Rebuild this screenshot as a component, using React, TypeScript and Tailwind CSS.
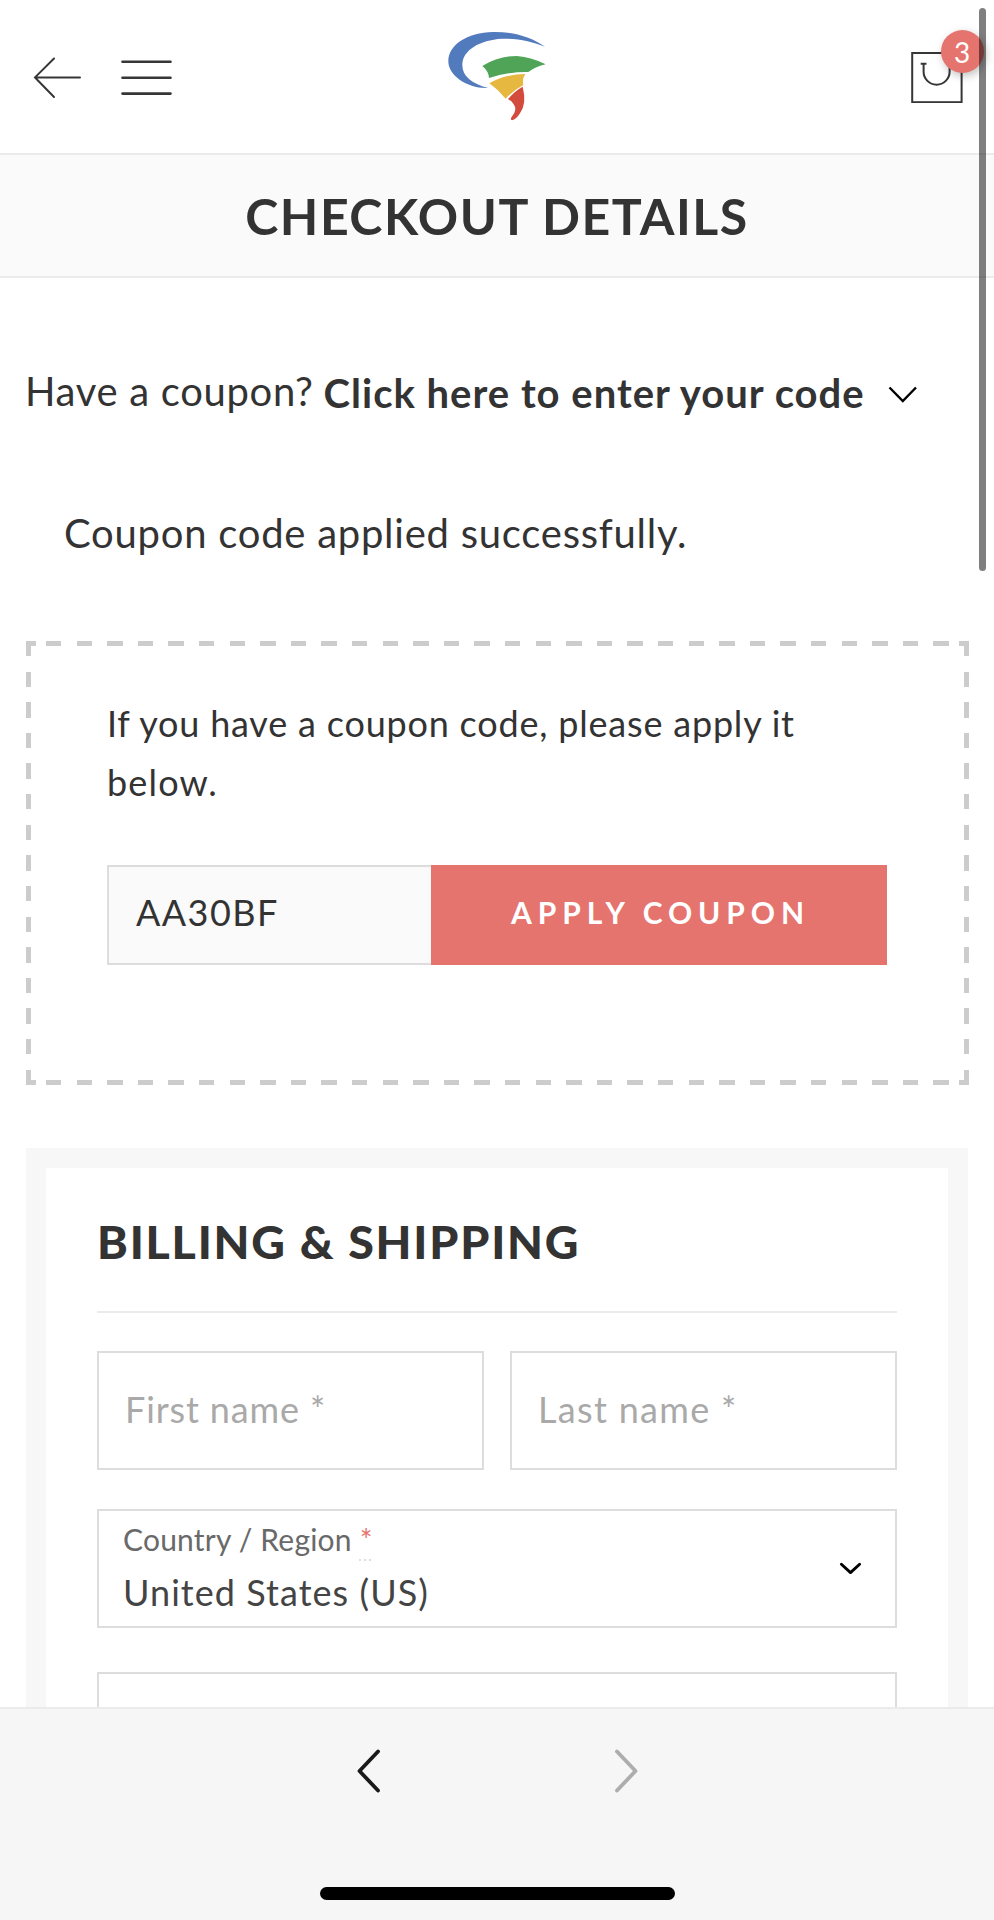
import React from 'react';

const FIELD = 'border-2 border-[#dddddd] bg-white';

function Logo() {
  return (
    <svg width="130" height="110" viewBox="0 0 390 330" aria-label="Logo">
      <path
        fill="#527bbd"
        d="M345 80C300 49 245 35 190 36C110 38 55 75 55 124C55 168 115 207 174 204C124 190 96 168 97 133C98 90 150 60 215 56C262 55 308 65 345 80Z"
      />
      <path fill="#4fa457" d="M157 138Q205 108 260 108Q306 112 347 133Q318 139 295 156Q235 155 177 174Q176 154 157 138Z" />
      <path fill="#e6b83f" d="M178 190Q225 163 286 162Q276 176 280 195Q250 211 227 236Q205 209 178 190Z" />
      <path fill="#d34b3c" d="M234 238Q252 214 278 200Q291 250 270 280Q258 299 246 301Q240 298 245 291Q264 268 250 251Q245 242 234 238Z" />
    </svg>
  );
}

function Header() {
  return (
    <header className="relative flex h-[153px] items-start justify-between bg-white">
      <div className="flex items-center gap-10 pt-14 pl-8">
        <svg width="49" height="43" viewBox="0 0 49 43" fill="none" stroke="#363636" strokeWidth="2" strokeLinecap="round">
          <path d="M48 21.4H3M22 2.5L3 21.4L22 41" />
        </svg>
        <svg width="51" height="43" viewBox="0 0 51 43" fill="none" stroke="#363636" strokeWidth="2.6" strokeLinecap="round">
          <path d="M1.5 5.7H49.5M1.5 21.7H49.5M1.5 37.6H49.5" />
        </svg>
      </div>

      <div className="absolute top-5 left-[430px]">
        <Logo />
      </div>

      <div className="relative mt-[51px] mr-[31px]">
        <svg width="52" height="52" viewBox="0 0 52 52" fill="none" stroke="#363636" strokeWidth="2">
          <rect x="1.2" y="2" width="49.4" height="49.2" />
          <path d="M9.7 12.8H15.5M12.6 12.8V20.7A13 13 0 0 0 38.6 20.7V12.8M35.7 12.8H41.5" />
        </svg>
        {/* cart counter */}
        <span className="absolute -top-[21px] left-[29.5px] flex h-[43px] w-[43px] items-center justify-center rounded-full bg-[#e5736e] text-[28px] leading-none text-white shadow-[2px_3px_9px_rgba(0,0,0,0.25)]">
          3
        </span>
      </div>
    </header>
  );
}

function DashRow() {
  return (
    <div className="flex h-[5px]">
      <div className="w-[10px] bg-[#cccccc]" />
      <div className="mx-[10px] flex-1 bg-[repeating-linear-gradient(90deg,#cccccc_0_15.3px,transparent_15.3px_30.6px)]" />
      <div className="w-[10px] bg-[#cccccc]" />
    </div>
  );
}

function DashColumn() {
  return <div className="w-[5px] bg-[repeating-linear-gradient(180deg,#cccccc_0_15.3px,transparent_15.3px_30.62px)]" />;
}

function CouponForm() {
  return (
    <div className="relative mx-[25.5px] mt-[77.5px] h-[444px] pt-[53.5px] pl-[81.5px]">
      {/* dashed frame */}
      <div className="pointer-events-none absolute inset-0 flex justify-between">
        <DashColumn />
        <DashColumn />
      </div>
      <div className="pointer-events-none absolute inset-0 flex flex-col justify-between">
        <DashRow />
        <DashRow />
      </div>

      <p className="text-[36px] leading-[58.5px] tracking-[0.8px]">
        If you have a coupon code, please apply it
        <br />
        <span className="tracking-[1.2px]">below.</span>
      </p>
      <div className="mt-[53.5px] flex h-[100px]">
        <div className="flex w-[324px] items-center border-2 border-r-0 border-[#dddddd] bg-[#fafafa] pb-[5px] pl-[27px] text-[36px] tracking-[1.44px]">
          AA30BF
        </div>
        <button className="flex w-[456px] items-center justify-center bg-[#e5736e] pb-1 pl-[3px] text-[30px] font-bold tracking-[5.9px] text-white">
          APPLY COUPON
        </button>
      </div>
    </div>
  );
}

function Billing() {
  return (
    <section className="mx-[26px] mt-[63.5px] h-[700px] border-[20px] border-[#f7f7f7] px-[51px] pt-[43px]">
      <h2 className="border-b-2 border-[#ebebeb] pb-[39.5px] text-[46.5px] leading-[60px] font-black tracking-[1.8px]">
        BILLING &amp; SHIPPING
      </h2>
      <div className="mt-[38.5px] grid grid-cols-2 gap-x-[26px] text-[36px] text-[#a9a9a9]">
        <div className={`${FIELD} flex h-[119px] items-center pb-1 pl-[26px] tracking-[0.87px]`}>First name *</div>
        <div className={`${FIELD} flex h-[119px] items-center pb-1 pl-[26px] tracking-[1.31px]`}>Last name *</div>
      </div>
      <div className={`${FIELD} mt-[39px] flex h-[119px] items-center justify-between pr-[33px] pl-[24px]`}>
        <div className="pb-[7px]">
          <div className="text-[30px] leading-[40px] tracking-[0.2px] text-[#696969]">
            Country / Region{' '}
            <span className="relative text-[#e5736e]">
              *
              <span className="absolute top-[38px] -left-px flex gap-[3px]">
                <i className="h-[2px] w-[2px] bg-[#dddddd]" />
                <i className="h-[2px] w-[2px] bg-[#dddddd]" />
                <i className="h-[2px] w-[2px] bg-[#dddddd]" />
              </span>
            </span>
          </div>
          <div className="mt-[13px] text-[36px] leading-[40px] tracking-[1.05px] text-[#444444]">United States (US)</div>
        </div>
        <svg width="23" height="14" viewBox="0 0 23 14" fill="none" stroke="#000" strokeWidth="2.9" strokeLinecap="round" strokeLinejoin="round">
          <path d="M2.4 2.2L11.5 10.6L20.6 2.2" />
        </svg>
      </div>
      <div className={`${FIELD} mt-[44px] h-[119px]`} />
    </section>
  );
}

function BottomBar() {
  return (
    <nav className="absolute inset-x-0 bottom-0 h-[213px] border-t-2 border-[#ebebeb] bg-[#f6f6f6]">
      <div className="mt-10 flex justify-center gap-[231px]">
        <svg width="26" height="44" viewBox="0 0 26 44" fill="none" stroke="#1a1a1a" strokeWidth="3.8" strokeLinecap="round" strokeLinejoin="round">
          <path d="M22 2.5L3.5 22L22 41.5" />
        </svg>
        <svg width="26" height="44" viewBox="0 0 26 44" fill="none" stroke="#adadad" strokeWidth="3.8" strokeLinecap="round" strokeLinejoin="round">
          <path d="M4 2.5L22.5 22L4 41.5" />
        </svg>
      </div>
      <div className="mx-auto mt-[94px] h-[13px] w-[355px] rounded-full bg-black" />
    </nav>
  );
}

export default function App() {
  return (
    <div className="relative h-[1920px] w-[994px] overflow-hidden bg-white font-['Lato',sans-serif] text-[#333333]">
      <Header />
      <h1 className="flex h-[125px] items-center justify-center border-y-2 border-[#ebebeb] bg-[#fafafa] pt-px text-[50px] font-bold tracking-[1.5px]">
        CHECKOUT DETAILS
      </h1>

      <div className="mt-[83px] flex items-start pl-[25px] text-[40px] leading-[60px]">
        <span className="tracking-[0.68px]">Have a coupon?</span>
        <span className="mt-[1.5px] ml-[10px] font-bold tracking-[1px]">Click here to enter your code</span>
        <svg className="mt-[24px] ml-[23px]" width="30" height="20" viewBox="0 0 30 20" fill="none" stroke="#000" strokeWidth="2.4">
          <path d="M1.5 2.5L14.8 16L28 2.5" />
        </svg>
      </div>
      <p className="mt-[80.5px] pl-[64px] text-[40px] leading-[60px] tracking-[0.75px]">Coupon code applied successfully.</p>

      <CouponForm />
      <Billing />
      <BottomBar />

      {/* page scrollbar */}
      <div className="absolute top-2 right-[8px] h-[563px] w-[7px] rounded-full bg-black/50" />
    </div>
  );
}
